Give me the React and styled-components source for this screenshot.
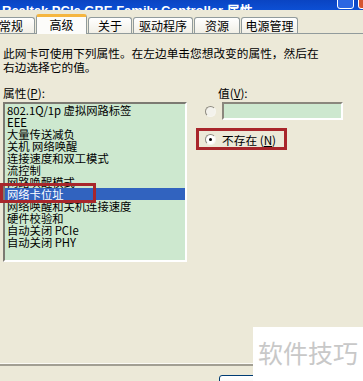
import React from 'react';
import styled, { createGlobalStyle } from 'styled-components';

const Global = createGlobalStyle`
  html, body { margin: 0; padding: 0; background: #ece9d8; }
  body { font-family: "Noto Sans CJK SC", "Noto Sans", sans-serif; }
`;

const Window = styled.div`
  position: relative;
  width: 363px;
  height: 381px;
  overflow: hidden;
  background: #ece9d8;
  font-family: "Noto Sans CJK SC", "Noto Sans", sans-serif;
  font-size: 11.7px;
  color: #000;
`;

const TitleBar = styled.div`
  height: 10px;
  display: flex;
  align-items: flex-end;
  overflow: hidden;
  background: linear-gradient(#0a44c2, #0c4fd4);
`;

const TitleText = styled.div`
  flex: 1;
  color: #fff;
  font: bold 13px "Liberation Sans", "Noto Sans CJK SC", sans-serif;
  line-height: 16px;
  white-space: nowrap;
  margin-bottom: -9px;
  padding-left: 2px;
`;

const TitleButtons = styled.div`
  display: flex;
  gap: 4px;
  margin-right: -16px;
  margin-bottom: 1px;
`;

const TitleButton = styled.div`
  width: ${p => (p.$close ? 21 : 17)}px;
  height: 21px;
  box-sizing: border-box;
  border: 1px solid #fff;
  border-radius: 3px;
  background: ${p => (p.$close ? '#d6552f' : '#2b66e2')};
`;

const TabRow = styled.div`
  height: 23px;
  box-sizing: border-box;
  padding-top: 4px;
  display: flex;
  align-items: flex-end;
  gap: 1px;
  margin-left: -13px;
`;

const Tab = styled.div`
  position: relative;
  width: ${p => p.$w}px;
  height: ${p => (p.$active ? 20 : 16)}px;
  margin-bottom: ${p => (p.$active ? -1 : 0)}px;
  z-index: ${p => (p.$active ? 1 : 0)};
  box-sizing: border-box;
  border: 1px solid #919b9c;
  border-bottom: none;
  border-top: ${p => (p.$active ? '3px solid #f5b640' : '1px solid #919b9c')};
  border-radius: 3px 3px 0 0;
  background: ${p => (p.$active ? '#fcfcfa' : 'linear-gradient(#ffffff, #f1efe6)')};
  font-size: 12px;
  line-height: 15px;
  text-align: center;
  white-space: nowrap;
`;

const PanelFrame = styled.div`
  border-bottom: 2px solid #a29f93;
`;

const Panel = styled.div`
  height: 331px;
  box-sizing: border-box;
  border-top: 1px solid #919b9c;
  border-bottom: 1px solid #fbfaf5;
  padding: 12px 0 0 3px;
`;

const Description = styled.p`
  margin: 0;
  line-height: 14px;
  white-space: nowrap;
`;

const Columns = styled.div`
  display: flex;
  margin-top: 12px;
`;

const LeftColumn = styled.div`
  position: relative;
  width: 184px;
`;

const Label = styled.div`
  line-height: 14px;
  height: 14px;
  margin-bottom: 2px;
  padding-left: ${p => p.$indent || 0}px;
  white-space: nowrap;
`;

const ListBox = styled.div`
  width: 184px;
  height: 160px;
  box-sizing: border-box;
  border: 2px solid;
  border-color: #7c7a72 #fff #fff #7c7a72;
  background: #cde8cf;
  overflow: hidden;
`;

const ListItem = styled.div`
  height: 12px;
  line-height: 12px;
  font-size: 11.3px;
  padding-left: 2px;
  white-space: nowrap;
  background: ${p => (p.$selected ? '#3163bf' : 'transparent')};
  color: ${p => (p.$selected ? '#fff' : '#000')};
`;

const Annotation = styled.div`
  position: absolute;
  left: -3px;
  top: 97px;
  width: 96px;
  height: 20px;
  box-sizing: border-box;
  border: 3px solid #a8262b;
  pointer-events: none;
`;

const RightColumn = styled.div`
  margin-left: 9px;
`;

const OptionRow = styled.div`
  display: flex;
  align-items: center;
  gap: 6px;
  padding-left: 9px;
`;

const Radio = styled.span`
  position: relative;
  flex: none;
  width: 11px;
  height: 11px;
  box-sizing: border-box;
  border-radius: 50%;
  border: 1px solid;
  border-color: #8d8a80 #f6f5f0 #f6f5f0 #8d8a80;
  background: ${p => (p.$checked ? '#fff' : '#f3f2ec')};
  &::after {
    content: '';
    display: ${p => (p.$checked ? 'block' : 'none')};
    position: absolute;
    left: 3px;
    top: 3px;
    width: 3px;
    height: 3px;
    border-radius: 50%;
    background: #000;
  }
`;

const TextBox = styled.div`
  width: 121px;
  height: 18px;
  box-sizing: border-box;
  border: 2px solid;
  border-color: #8a877d #fff #fff #8a877d;
  background: #cde8cf;
`;

const Highlight = styled.div`
  margin-top: 8px;
  width: 91px;
  height: 22px;
  box-sizing: border-box;
  border: 3px solid #a8262b;
  padding-left: 6px;
  display: flex;
  align-items: center;
  gap: 6px;
  white-space: nowrap;
`;

const Footer = styled.div`
  display: flex;
  gap: 6px;
  padding: 9px 0 0 219px;
`;

const Button = styled.div`
  flex: none;
  width: 75px;
  height: 23px;
  box-sizing: border-box;
  border: 1px solid #003c74;
  border-radius: 3px;
  background: linear-gradient(#ffffff, #ecebe6);
  font-size: 12px;
  line-height: 21px;
  text-align: center;
`;

const Watermark = styled.div`
  position: absolute;
  left: 253px;
  top: 327px;
  width: 110px;
  height: 54px;
  background: #fff;
  color: #c8c8c8;
  font-size: 25px;
  line-height: 50px;
  padding-left: 5px;
  box-sizing: border-box;
  white-space: nowrap;
`;

const tabs = [
  { label: '常规', w: 48 },
  { label: '高级', w: 51, active: true },
  { label: '关于', w: 44 },
  { label: '驱动程序', w: 60 },
  { label: '资源', w: 46 },
  { label: '电源管理', w: 57 },
];

const items = [
  '802.1Q/1p 虚拟网路标签',
  'EEE',
  '大量传送减负',
  '关机 网络唤醒',
  '连接速度和双工模式',
  '流控制',
  '网路唤醒模式',
  '网络卡位址',
  '网络唤醒和关机连接速度',
  '硬件校验和',
  '自动关闭 PCIe',
  '自动关闭 PHY',
];

export default function App() {
  return (
    <Window>
      <Global />
      <TitleBar>
        <TitleText>Realtek PCIe GBE Family Controller 属性</TitleText>
        <TitleButtons>
          <TitleButton />
          <TitleButton $close />
        </TitleButtons>
      </TitleBar>
      <TabRow>
        {tabs.map(t => (
          <Tab key={t.label} $w={t.w} $active={t.active}>{t.label}</Tab>
        ))}
      </TabRow>
      <PanelFrame>
        <Panel>
          <Description>此网卡可使用下列属性。在左边单击您想改变的属性，然后在</Description>
          <Description>右边选择它的值。</Description>
          <Columns>
            <LeftColumn>
              <Label>属性(<u>P</u>):</Label>
              <ListBox>
                {items.map((it, i) => (
                  <ListItem key={it} $selected={i === 7}>{it}</ListItem>
                ))}
              </ListBox>
              <Annotation />
            </LeftColumn>
            <RightColumn>
              <Label $indent={22}>值(<u>V</u>):</Label>
              <OptionRow>
                <Radio />
                <TextBox />
              </OptionRow>
              <Highlight>
                <Radio $checked />
                <span>不存在 (<u>N</u>)</span>
              </Highlight>
            </RightColumn>
          </Columns>
        </Panel>
      </PanelFrame>
      <Footer>
        <Button>确定</Button>
        <Button>取消</Button>
      </Footer>
      <Watermark>软件技巧</Watermark>
    </Window>
  );
}
